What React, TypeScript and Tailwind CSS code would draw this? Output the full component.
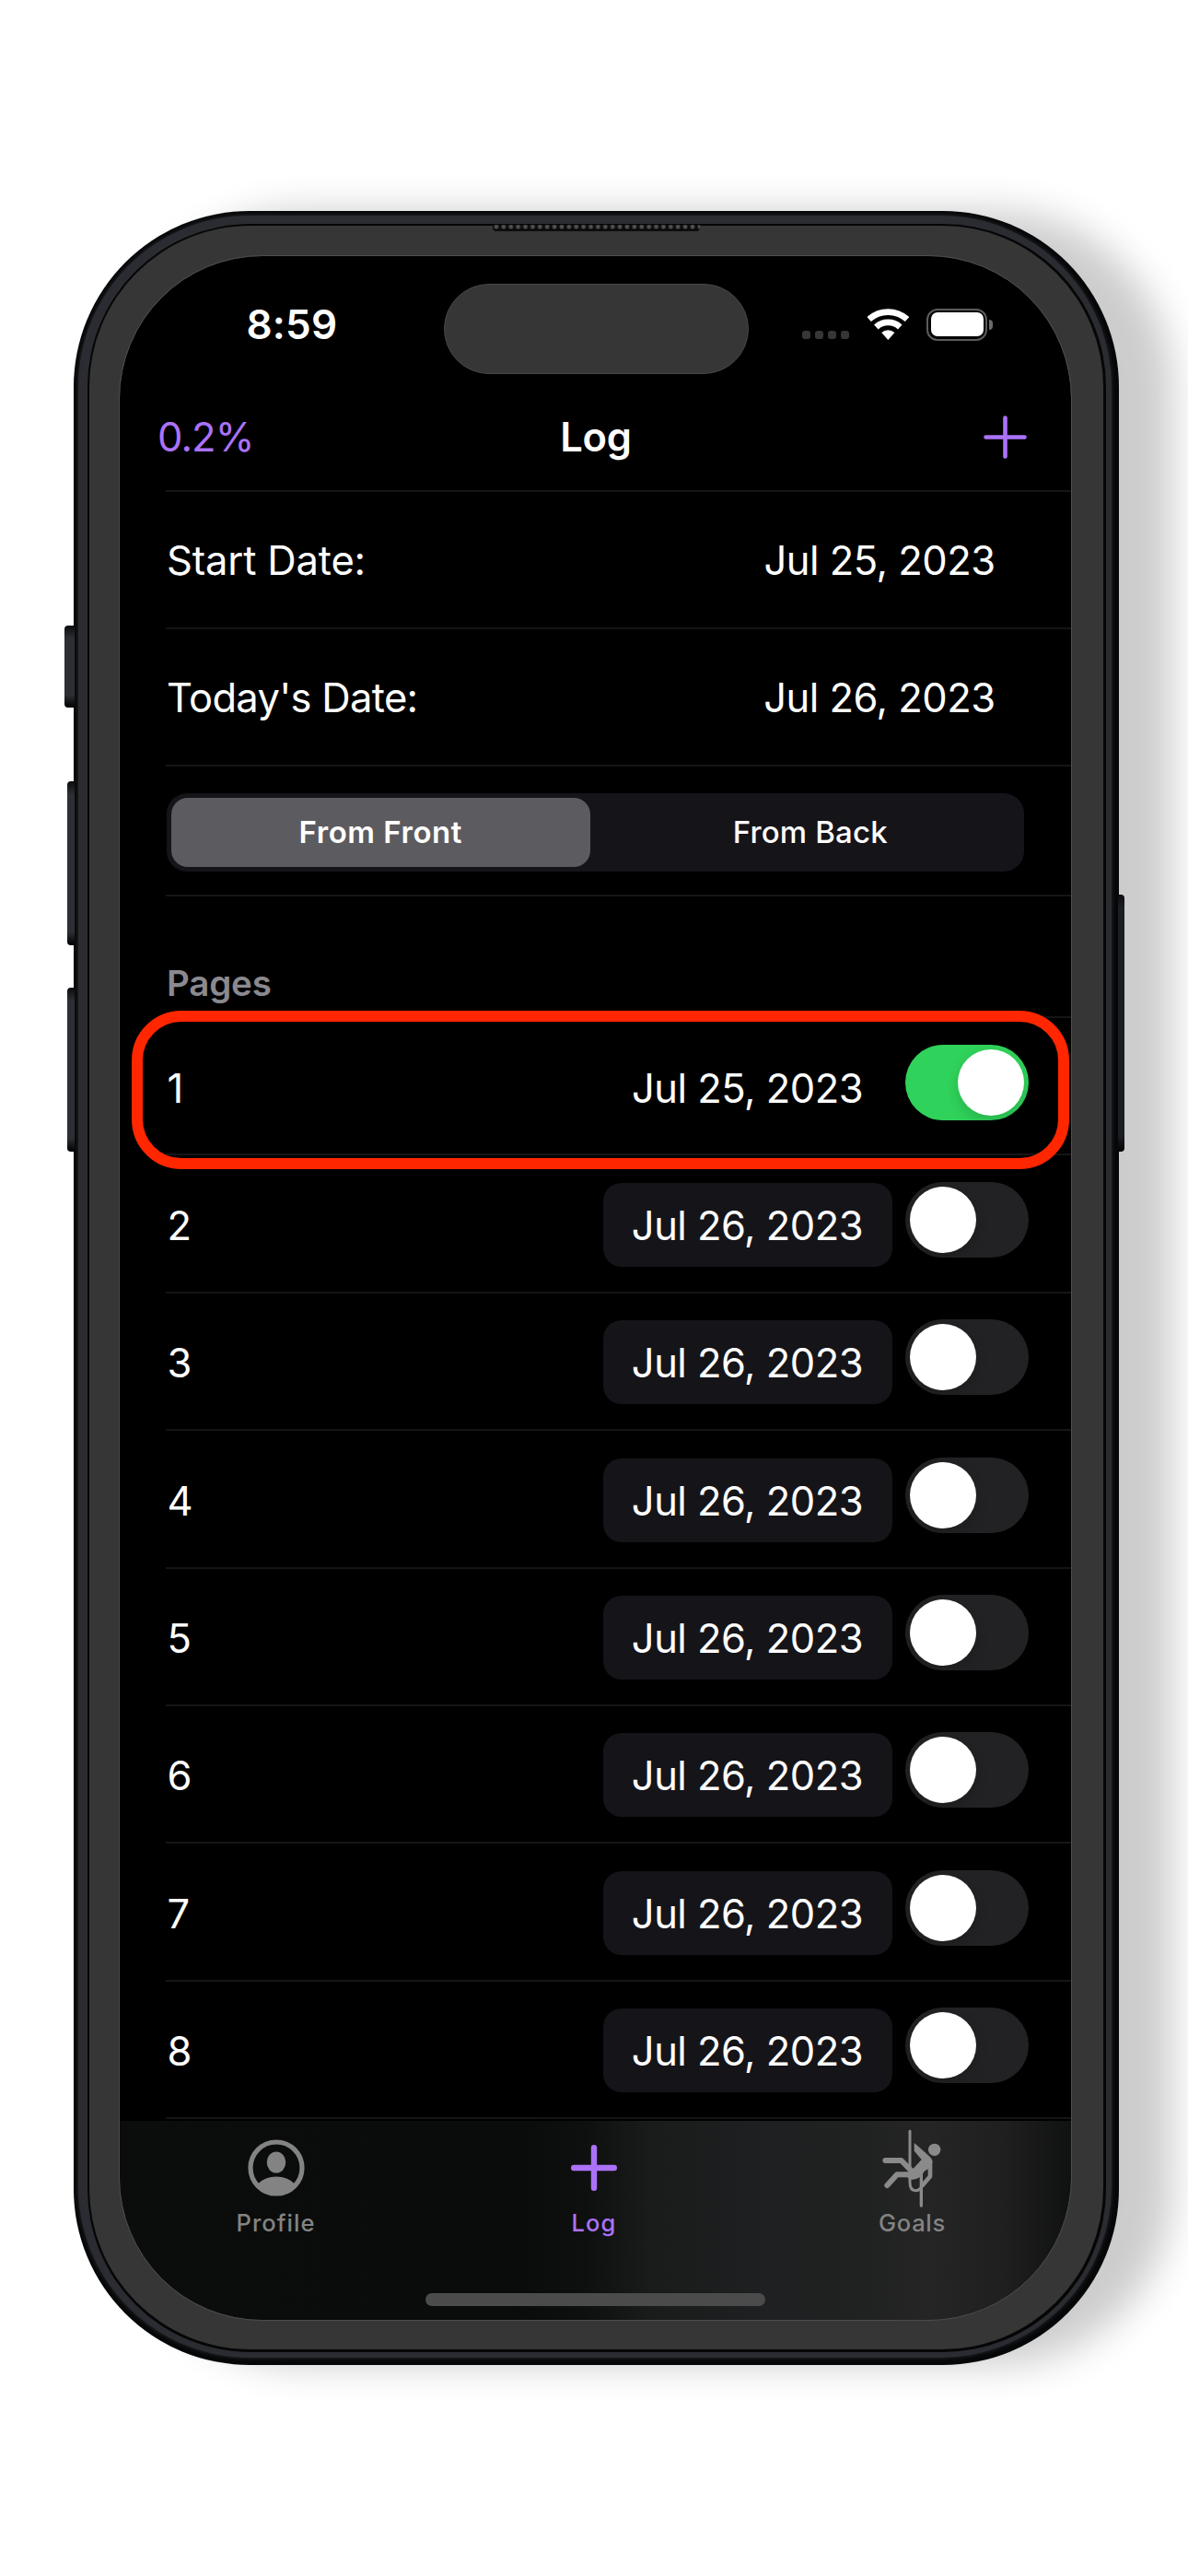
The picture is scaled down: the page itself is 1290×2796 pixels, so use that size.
import React from 'react';

const entries = [
  { page: 1, date: 'Jul 25, 2023', done: true },
  { page: 2, date: 'Jul 26, 2023', done: false },
  { page: 3, date: 'Jul 26, 2023', done: false },
  { page: 4, date: 'Jul 26, 2023', done: false },
  { page: 5, date: 'Jul 26, 2023', done: false },
  { page: 6, date: 'Jul 26, 2023', done: false },
  { page: 7, date: 'Jul 26, 2023', done: false },
  { page: 8, date: 'Jul 26, 2023', done: false },
];

function WifiIcon() {
  return (
    <svg viewBox="247 45 133 101" className="h-[34px] w-[45px]" fill="none" stroke="#fff" strokeWidth="20">
      <path d="M251.5 79.5A91 91 0 0 1 374.5 79.5" />
      <path d="M274.5 104.5A57 57 0 0 1 351.5 104.5" />
      <path d="M313 146L292 122.5A31 31 0 0 1 334 122.5Z" fill="#fff" stroke="none" />
    </svg>
  );
}

function Battery() {
  return (
    <div className="flex items-center gap-[2px]">
      <div className="h-[35px] w-[66px] rounded-[12px] border-[2.5px] border-[#5c5c5c] p-[2.5px]">
        <div className="h-full w-full rounded-[7px] bg-white" />
      </div>
      <div className="h-[11px] w-[4px] rounded-r-full bg-[#6a6a6a]" />
    </div>
  );
}

function StatusBar() {
  return (
    <div className="flex h-[136px] shrink-0 items-start">
      <div className="ml-[137.5px] mt-[43.5px] w-[214.5px] text-[44px] font-semibold leading-[60px] tracking-[0.2px]">
        8:59
      </div>
      <div className="mt-[29.5px] h-[98px] w-[330.5px] rounded-full border border-[#484848] bg-[#353635]" />
      <div className="ml-[58.5px] mt-[81px] flex gap-[5px]">
        {[0, 1, 2, 3].map((i) => (
          <div key={i} className="size-[9px] rounded-[3px] bg-[#363636]" />
        ))}
      </div>
      <div className="ml-[20px] mt-[57px]">
        <WifiIcon />
      </div>
      <div className="ml-[19px] mt-[56.5px]">
        <Battery />
      </div>
    </div>
  );
}

function Header() {
  return (
    <div className="grid h-[118px] shrink-0 grid-cols-3 items-center pt-[2px] leading-[60px]">
      <div className="pl-[41px] text-[43.5px] tracking-[-0.9px] text-[#ab72f9]">0.2%</div>
      <div className="pl-[1px] text-center text-[43.5px] font-semibold tracking-[-0.29px]">Log</div>
      <div className="flex justify-end pr-12">
        <svg viewBox="0 0 47 47" className="size-[47px]" stroke="#ab72f9" strokeWidth="4.6" strokeLinecap="round">
          <path d="M23.5 2.5V44.5M2.5 23.5H44.5" />
        </svg>
      </div>
    </div>
  );
}

function DateRow({ label, date, spacing }: { label: string; date: string; spacing: string }) {
  return (
    <div className="flex h-[149px] shrink-0 items-center justify-between border-b-2 border-[#151517] pl-[1px] pr-[82.5px] pt-px text-[43.5px] leading-[60px]">
      <span className={spacing}>{label}</span>
      <span className="tracking-[-0.52px]">{date}</span>
    </div>
  );
}

function Segmented() {
  return (
    <div className="h-[141px] shrink-0 border-b-2 border-[#151517] pt-[29px]">
      <div className="ml-px grid h-[85px] w-[931px] grid-cols-2 gap-3 rounded-[22px] bg-[#151419] p-[5px] text-center text-[33px] leading-[75px]">
        <div className="rounded-[18px] bg-[#5c5b60] font-semibold tracking-[0.52px]">From Front</div>
        <div className="font-medium tracking-[0.15px]">From Back</div>
      </div>
    </div>
  );
}

function Toggle({ on }: { on: boolean }) {
  return (
    <div
      className={
        on
          ? 'flex h-[82px] w-[134px] justify-end rounded-full bg-[#2fd25a] p-[5px]'
          : 'flex h-[82px] w-[134px] rounded-full bg-[#222224] p-[5px]'
      }
    >
      <div className="size-[72px] rounded-full bg-white shadow-[0_6px_14px_rgba(0,0,0,0.15)]" />
    </div>
  );
}

function PageRow({ page, date, done }: { page: number; date: string; done: boolean }) {
  return (
    <div className="relative flex h-[149.4px] shrink-0 items-start border-b-2 border-[#151517] text-[43.5px] leading-[92px]">
      <div className="mt-[29.5px] grow pl-[1.5px]">{page}</div>
      <div
        className={
          done
            ? 'mt-[29.5px] h-[91px] w-[314px] text-center tracking-[-0.52px]'
            : 'mt-[29.5px] h-[91px] w-[314px] rounded-[20px] bg-[#151419] text-center tracking-[-0.52px]'
        }
      >
        {date}
      </div>
      <div className="ml-[14px] mr-[46.5px] mt-[28.5px]">
        <Toggle on={done} />
      </div>
      {done && (
        <div className="absolute -left-[37.5px] -top-[8px] z-10 h-[172px] w-[1018px] rounded-[54px] border-12 border-[#ff2600]" />
      )}
    </div>
  );
}

function ProfileIcon() {
  return (
    <svg viewBox="0 0 62 62" className="size-[62px]">
      <circle cx="31" cy="31" r="28" fill="none" stroke="#838383" strokeWidth="5.2" />
      <ellipse cx="31" cy="25" rx="10.3" ry="11.5" fill="#838383" />
      <path d="M11 48.5C16 43.5 23 40.6 31 40.6S46 43.5 51 48.5C46 55 39 59 31 59S16 55 11 48.5Z" fill="#838383" />
    </svg>
  );
}

function ClimberIcon() {
  return (
    <svg
      viewBox="100 60 230 265"
      className="h-[88.3px] w-[76.7px] shrink-0"
      fill="none"
      stroke="#8a8a8a"
      strokeLinecap="round"
      strokeLinejoin="round"
    >
      <path d="M208 70V236C208 254 216 263 227 263C234 263 239 260 243 255" strokeWidth="9" />
      <path d="M245 205V312" strokeWidth="10" />
      <path d="M128 165H180L214 200" strokeWidth="18" />
      <path d="M134 246L166 211H215" strokeWidth="18" />
      <path d="M274 172V217L249 246" strokeWidth="14" />
      <path d="M222 108L234 118L270 150Q282 160 282 172L266 194Q256 196 250 208Q240 226 218 227Q200 228 198 212L213 196L222 188L246 162L222 134Z" fill="#8a8a8a" stroke="none" />
      <circle cx="288" cy="130" r="20" fill="#8a8a8a" stroke="none" />
    </svg>
  );
}

function TabBar() {
  return (
    <div className="mt-auto h-[216px] shrink-0 bg-[linear-gradient(to_right,#0b0d0c_0%,#0a0c0b_42%,#0e100f_49%,#1a1b1b_56%,#1e2021_68%,#202121_78%,#242524_85%,#1e1f1e_93%,#101211_100%)]">
      <div className="flex justify-center pr-[3px] pt-[20px] text-[25.5px] font-medium leading-[30px] text-[#838383]">
        <div className="flex w-[345.5px] shrink-0 flex-col items-center gap-[14px]">
          <ProfileIcon />
          <span className="tracking-[1.04px]">Profile</span>
        </div>
        <div className="flex w-[345.5px] shrink-0 flex-col items-center gap-[14px] text-[#ab72f9]">
          <svg viewBox="0 0 62 62" className="size-[62px]" stroke="#ab72f9" strokeWidth="6.4" strokeLinecap="round">
            <path d="M31 9.2V52.8M9.2 31H52.8" />
          </svg>
          <span className="tracking-[1.2px]">Log</span>
        </div>
        <div className="flex w-[345.5px] shrink-0 flex-col items-center gap-[14px]">
          <div className="flex h-[62px] items-center pt-[2px]">
            <ClimberIcon />
          </div>
          <span className="tracking-[0.7px]">Goals</span>
        </div>
      </div>
      <div className="mx-auto mt-[60.5px] h-[14px] w-[369px] rounded-full bg-[#4b4b4b]" />
    </div>
  );
}

function SideButtons() {
  return (
    <>
      <div className="absolute -left-[10px] top-[450px] h-[89px] w-[11px] rounded-l-[4px] bg-[linear-gradient(to_bottom,#0b0c0e,#2c2f33_15%,#2c2f33_85%,#000)]" />
      <div className="absolute -left-[7px] top-[619px] h-[178px] w-[8px] rounded-l-[4px] bg-[linear-gradient(to_bottom,#0b0c0e,#2c2f33_8%,#2c2f33_92%,#000)]" />
      <div className="absolute -left-[7px] top-[843px] h-[178px] w-[8px] rounded-l-[4px] bg-[linear-gradient(to_bottom,#0b0c0e,#2c2f33_8%,#2c2f33_92%,#000)]" />
      <div className="absolute -right-[6px] top-[742px] h-[279px] w-[7px] rounded-r-[4px] bg-[linear-gradient(to_bottom,#0b0c0e,#1b1e23_5%,#1b1e23_94%,#000)]" />
    </>
  );
}

export default function App() {
  return (
    <div className="h-[2796px] w-[1290px] overflow-hidden bg-white pl-[80px] pt-[229px] font-[Inter,sans-serif] text-white">
      <div className="relative h-[2338px] w-[1135px] rounded-[191px] bg-[#060708] pb-[8px] pl-[5px] pr-[8px] pt-[5px] shadow-[58px_0_42px_rgba(0,0,0,0.2)]">
        <SideButtons />
        <div className="h-full w-full rounded-[186px] bg-[#2a2c31] pb-[6px] pl-[10px] pr-[6px] pt-[9px] shadow-[0_0_5px_#2a2c31]">
          <div className="h-full w-full rounded-[177px] bg-[#060606] pb-[3px] pl-[2px] pr-[3px] pt-[2px]">
            <div className="h-full w-full rounded-[175px] bg-[#353635] pb-[32px] pl-[33px] pr-[35px] pt-[33px]">
              <div className="flex h-full w-full flex-col overflow-hidden rounded-[155px] bg-black outline-1 outline-[#4c4d4c]">
                <StatusBar />
                <Header />
                <div className="ml-[50px] border-t-2 border-[#151517]">
                  <DateRow label="Start Date:" date="Jul 25, 2023" spacing="tracking-[-0.17px]" />
                  <DateRow label="Today's Date:" date="Jul 26, 2023" spacing="tracking-[-0.69px]" />
                  <Segmented />
                  <div className="flex h-[132px] items-end border-b-2 border-[#151517] pb-[12px] pl-[1px] text-[38.5px] font-semibold leading-[48px] tracking-[-0.19px] text-[#8a898f]">
                    Pages
                  </div>
                  {entries.map((entry) => (
                    <PageRow key={entry.page} {...entry} />
                  ))}
                </div>
                <TabBar />
              </div>
            </div>
          </div>
        </div>
        <div className="absolute left-[455px] top-[15px] h-[7px] w-[225px] rounded-b-[4px] bg-[#0c0c0c] bg-[radial-gradient(circle_at_50%_30%,#5a5a5a_0,#444_2px,transparent_3px)] bg-[length:7.9px_7px]" />
      </div>
    </div>
  );
}
